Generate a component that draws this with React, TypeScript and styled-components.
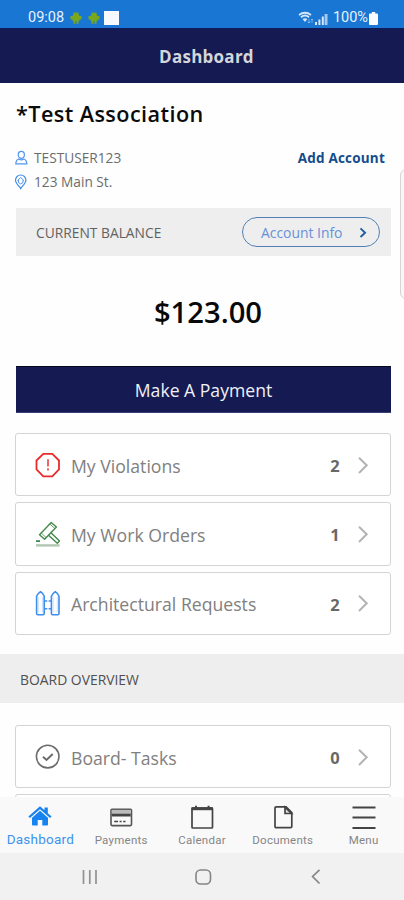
import React from "react";
import styled, { createGlobalStyle } from "styled-components";

const GlobalStyle = createGlobalStyle`
  * { box-sizing: border-box; }
  html, body { margin: 0; padding: 0; background: #fff; }
  body { font-family: "Open Sans", sans-serif; overflow: hidden; }
  svg { display: block; flex: none; }
  button { font-family: inherit; cursor: pointer; }
`;

const Screen = styled.div`
  position: relative;
  width: 404px;
  height: 900px;
  overflow: hidden;
  display: flex;
  flex-direction: column;
  background: #fefefe;
`;

const StatusBar = styled.div`
  height: 28px;
  flex: none;
  padding: 8px 26px 0 28px;
  display: flex;
  align-items: center;
  justify-content: space-between;
  background: #1976d2;
  color: #e8f1fc;
  font-family: Roboto, sans-serif;
  font-size: 14.5px;
  line-height: 20px;
`;

const StatusGroup = styled.div<{ $gap: number }>`
  display: flex;
  align-items: center;
  gap: ${(p) => p.$gap}px;
`;

const Notice = styled.span`
  width: 15px;
  height: 14px;
  margin-left: -2px;
  background: #f6f9ff;
`;

const Header = styled.header`
  height: 55px;
  flex: none;
  display: flex;
  align-items: center;
  justify-content: center;
  padding: 1px 0 0 9px;
  border-top: 1px solid #0f1c5c;
  background: #151a52;
  color: #d3d6db;
  font-size: 17px;
  font-weight: 700;
  letter-spacing: 0.25px;
`;

const Content = styled.main`
  flex: 1;
  min-height: 0;
  overflow: hidden;
  display: flex;
  flex-direction: column;
`;

const Title = styled.h1`
  flex: none;
  margin: 17px 0 0 16px;
  font-size: 21.6px;
  line-height: 28px;
  font-weight: 600;
  letter-spacing: 0.43px;
  color: #0b0b0b;
`;

const AccountRows = styled.section`
  flex: none;
  display: flex;
  justify-content: space-between;
  margin: 18px 19px 0 14px;
`;

const Details = styled.div`
  display: flex;
  flex-direction: column;
`;

const Detail = styled.div`
  height: 24px;
  display: flex;
  align-items: center;
  gap: 6px;
  font-size: 13.7px;
  line-height: 18px;
  color: #6c6c6c;
  white-space: nowrap;
`;

const AddAccount = styled.a`
  font-size: 13.5px;
  line-height: 24px;
  font-weight: 700;
  color: #144c8c;
  white-space: nowrap;
  letter-spacing: 0.2px;
`;

const BalanceBar = styled.section`
  flex: none;
  height: 48px;
  margin: 14px 13px 0 16px;
  padding: 0 11px 0 20px;
  display: flex;
  align-items: center;
  justify-content: space-between;
  background: #eee;
  color: #626262;
  font-size: 13.8px;
`;

const InfoButton = styled.button`
  width: 138px;
  height: 30px;
  padding: 0 11px 0 18px;
  display: flex;
  align-items: center;
  justify-content: space-between;
  border: 1px solid #5380b4;
  border-radius: 15px;
  background: transparent;
  color: #6791d8;
  font-size: 13.9px;
  white-space: nowrap;
`;

const Amount = styled.div`
  flex: none;
  height: 110px;
  padding: 1px 0 0 12px;
  display: flex;
  align-items: center;
  justify-content: center;
  font-size: 29.2px;
  font-weight: 600;
  color: #080808;
`;

const PayButton = styled.button`
  flex: none;
  height: 47px;
  margin: 0 13px 0 16px;
  padding: 0;
  border: 0;
  border-top: 1px solid #05081c;
  border-bottom: 1px solid #3a3f78;
  background: #151a52;
  color: #f0f1f6;
  font-size: 17.6px;
  font-weight: 400;
`;

const CardList = styled.section<{ $top: number }>`
  flex: none;
  margin: ${(p) => p.$top}px 13px 0 15px;
  display: flex;
  flex-direction: column;
  gap: 6px;
`;

const Card = styled.div`
  height: 63.3px;
  padding: 0 21px 0 18px;
  display: flex;
  align-items: center;
  border: 1.5px solid #d4d4d4;
  border-radius: 3px;
  background: #fff;
`;

const CardLabel = styled.span`
  flex: 1;
  margin-left: 9px;
  padding-top: 2px;
  font-size: 17.65px;
  color: #808080;
  white-space: nowrap;
`;

const Count = styled.span`
  width: 12px;
  margin-right: 16px;
  padding-top: 2px;
  text-align: center;
  font-size: 16.5px;
  font-weight: 700;
  color: #686868;
`;

const SectionBar = styled.h2`
  flex: none;
  height: 49px;
  margin: 19px 0 0;
  padding: 2px 0 0 20px;
  display: flex;
  align-items: center;
  background: #eee;
  color: #505050;
  font-size: 13.9px;
  font-weight: 400;
`;

const TabBar = styled.nav`
  flex: none;
  height: 56px;
  display: grid;
  grid-template-columns: repeat(5, 80.8px);
  background: #f9f9f9;
`;

const Tab = styled.div<{ $active?: boolean }>`
  padding-top: 7px;
  display: flex;
  flex-direction: column;
  align-items: center;
  color: ${(p) => (p.$active ? "#1683f0" : "#444")};
`;

const TabLabel = styled.span<{ $active?: boolean }>`
  margin-top: ${(p) => (p.$active ? 1 : 2)}px;
  font-family: Roboto, sans-serif;
  font-size: ${(p) => (p.$active ? 13.5 : 11.5)}px;
  line-height: 16px;
  letter-spacing: 0.25px;
  color: ${(p) => (p.$active ? "#3d94ee" : "#858585")};
  white-space: nowrap;
`;

const SystemBar = styled.footer`
  flex: none;
  height: 47px;
  padding: 0 83px 0 82px;
  display: flex;
  align-items: center;
  justify-content: space-between;
  background: #f1f1f1;
`;

const ScrollHandle = styled.div`
  position: absolute;
  right: -8px;
  top: 169px;
  width: 12px;
  height: 130px;
  border: 1.5px solid #d5d5d5;
  border-radius: 6px;
  background: #f7f7f7;
`;

const Robot = () => (
  <svg width="12" height="14" viewBox="0 0 12 14" fill="#79a81e">
    <path d="M3 4.500a3 3 0 0 1 6 0zM2.600 4.500h6.800V10H2.600zM.5 5h2.500v3.500H.5zM9 5h2.500v3.500H9zM3.500 10h2v2.700h-2zM6.500 10h2v2.700h-2z" />
    <path d="M3.600 1l1 1.700M8.400 1l-1 1.700" stroke="#79a81e" strokeWidth=".7" />
  </svg>
);

const Wifi = () => (
  <svg width="16" height="14" viewBox="0 0 16 14" fill="none" stroke="#d5e6fa">
    <path d="M1 4q6-4.500 12 0M3 6.200q4-3.400 8 0" strokeWidth="1.900" />
    <path d="M4.500 8L7 11l2.400-3Q7 6.500 4.500 8z" fill="#d5e6fa" stroke="none" />
    <path d="M11 8v4m-1.200-1.400L11 12l1.200-1.400M14 12V8m-1 1l1-1 1 1" strokeWidth=".7" opacity=".7" />
  </svg>
);

const Signal = () => (
  <svg width="13" height="13" viewBox="0 0 13 13" fill="#d5e6fa">
    <path d="M0 10h2v3H0zM3.400 7.500h2V13h-2zM6.800 4.500h2V13h-2z" />
    <path d="M9.600 2h2.900v11H9.600z" opacity=".75" />
  </svg>
);

const Battery = () => (
  <svg width="9" height="13" viewBox="0 0 9 13" fill="#f7faff">
    <path d="M2.800 0h3.400v1.600H8q1 0 1 1V12q0 1-1 1H1q-1 0-1-1V2.600q0-1 1-1h1.800z" />
  </svg>
);

const Person = () => (
  <svg width="14" height="16" viewBox="0 0 14 16" fill="none" stroke="#5296f0" strokeWidth="1.200">
    <ellipse cx="7.300" cy="4.800" rx="3.100" ry="3.500" />
    <path d="M4.700 9Q2 9.800 1.800 13.800h11Q12.600 9.800 9.900 9q-2.600 1.600-5.200 0z" />
  </svg>
);

const Pin = () => (
  <svg width="14" height="16" viewBox="0 0 14 16" fill="none" stroke="#438cee" strokeWidth="1.200">
    <path d="M6.700 14.600C5 11.900 1.500 9 1.500 6.200a5.200 5.200 0 0 1 10.400 0c0 2.800-3.500 5.700-5.200 8.400z" />
    <path d="M3.500 6.500l3.200-3 3.200 3M4.500 6v2.500L6.700 10 9 8.500V6" strokeWidth=".9" />
  </svg>
);

const SmallChevron = () => (
  <svg width="9" height="12" viewBox="0 0 9 12" fill="none" stroke="#245f9c" strokeWidth="1.900">
    <path d="M1.500 2.400l4.600 4.300L1.500 11" />
  </svg>
);

const Chevron = () => (
  <svg width="12" height="18" viewBox="0 0 12 18" fill="none" stroke="#b3b3b3" strokeWidth="2">
    <path d="M2 1.700L9.700 9.300 2 17" />
  </svg>
);

const Violation = () => (
  <svg width="28" height="28" viewBox="0 0 28 28" fill="none" stroke="#e92b2b" strokeWidth="1.800">
    <path d="M9.300 2.900h9L25 9.500v9l-6.700 6.800h-9L2.500 18.500v-9z" />
    <path d="M14 8.300v7.200M14 17.300v2.300" strokeWidth="2" stroke="#f06464" />
  </svg>
);

const Gavel = () => (
  <svg width="28" height="28" viewBox="0 0 28 28" fill="none" stroke="#43894a" strokeWidth="1.400" strokeLinejoin="round">
    <path d="M5.500 14.700L17.200 2.500l5.200 4.600L10.600 19.300z" />
    <path d="M7.300 13l4.800 4.600M15.800 4l5 4.500" strokeWidth=".8" />
    <path d="M14.300 15l9 8.200 2.200-2.300-8.800-8.300" />
    <path d="M2 21.100h4" strokeWidth="1.800" />
    <path d="M2 25.400h23.600" stroke="#b0c6b0" strokeWidth="2.400" />
  </svg>
);

const Fence = () => (
  <svg width="28" height="28" viewBox="0 0 28 28" fill="none" stroke="#3f8eed" strokeWidth="1.600" strokeLinejoin="round">
    <path d="M2.600 24.500V7.200q1-2.600 3.900-4.600 2.900 2 3.700 4.600v17.300q0 1.200-1.200 1.200H3.800q-1.200 0-1.200-1.200zM17.400 24.500V7.200q1-2.600 3.900-4.600 2.900 2 3.700 4.600v17.300q0 1.200-1.200 1.200h-5.200q-1.200 0-1.200-1.200z" />
    <path d="M10.500 12h2.800M14.600 12h2.800M10.500 19.800h2.800M14.600 19.800h2.800" />
    <path d="M4.400 8v15.700M8.500 8v15.700M19.200 8v15.700M23.300 8v15.700" stroke="#b9d8fc" strokeWidth=".7" />
  </svg>
);

const TaskCheck = () => (
  <svg width="28" height="28" viewBox="0 0 28 28" fill="none" stroke="#6b6b6b">
    <circle cx="13.700" cy="13.600" r="11.300" strokeWidth="1.600" />
    <path d="M9 13.800l3.500 3.200 6.200-6" strokeWidth="2" />
  </svg>
);

const HomeIcon = () => (
  <svg width="26" height="26" viewBox="0 0 26 26" fill="currentColor">
    <path d="M1.400 12.400L13 2.200l4.500 4V3.500h3.300v5.700l3.800 3.200-1.500 1.700L13 5.200 2.900 14.100z" />
    <path d="M5 13.800l8-7.100 8 7.100V20.500q0 .9-.9.900h-4.800v-5.300h-4.600v5.300H5.900q-.9 0-.9-.9z" />
  </svg>
);

const CreditCard = () => (
  <svg width="26" height="26" viewBox="0 0 26 26" fill="none" stroke="currentColor">
    <rect x="3" y="5.200" width="20.500" height="16.400" rx="1" strokeWidth="1.600" stroke="#555" />
    <path d="M3.800 7.500h18.900" stroke="#bbb" strokeWidth="3.200" />
    <path d="M3.800 11h18.900" strokeWidth="3" />
    <path d="M6.200 17.500h3.800M11.600 17.500h2M15.200 17.500h2.300" strokeWidth="1.700" />
  </svg>
);

const CalendarIcon = () => (
  <svg width="26" height="26" viewBox="0 0 26 26" fill="none" stroke="currentColor">
    <rect x="3" y="4" width="20.500" height="20" rx=".8" strokeWidth="1.700" />
    <path d="M2.500 4.700h21.500" strokeWidth="3" />
    <path d="M7 1.800v3M19.600 1.800v3" strokeWidth="2" />
  </svg>
);

const DocumentIcon = () => (
  <svg width="26" height="26" viewBox="0 0 26 26" fill="none" stroke="currentColor" strokeWidth="1.700">
    <path d="M6.300 2.800h9.800l5.700 5.900v13.700q0 1.300-1.300 1.300H6.300Q5 23.700 5 22.400V4.100q0-1.300 1.300-1.300z" />
    <path d="M15 3.200v6.300h6.500L15 3.200z" fill="#ddd" />
  </svg>
);

const MenuIcon = () => (
  <svg width="26" height="26" viewBox="0 0 26 26" stroke="currentColor" strokeWidth="2.200">
    <path d="M1.500 3.500h23M1.500 13.500h23M1.500 24h23" />
  </svg>
);

const residentItems = [
  { label: "My Violations", count: 2, icon: <Violation /> },
  { label: "My Work Orders", count: 1, icon: <Gavel /> },
  { label: "Architectural Requests", count: 2, icon: <Fence /> },
];

const tabs = [
  { label: "Dashboard", icon: <HomeIcon />, active: true },
  { label: "Payments", icon: <CreditCard /> },
  { label: "Calendar", icon: <CalendarIcon /> },
  { label: "Documents", icon: <DocumentIcon /> },
  { label: "Menu", icon: <MenuIcon /> },
];

export default function App() {
  return (
    <Screen>
      <GlobalStyle />
      <StatusBar>
        <StatusGroup $gap={6}>
          <span>09:08</span>
          <Robot />
          <Robot />
          <Notice />
        </StatusGroup>
        <StatusGroup $gap={1}>
          <Wifi />
          <Signal />
          <span>&nbsp;100%</span>
          <Battery />
        </StatusGroup>
      </StatusBar>
      <Header>Dashboard</Header>
      <Content>
        <Title>*Test Association</Title>
        <AccountRows>
          <Details>
            <Detail><Person />TESTUSER123</Detail>
            <Detail><Pin />123 Main St.</Detail>
          </Details>
          <AddAccount>Add Account</AddAccount>
        </AccountRows>
        <BalanceBar>
          CURRENT BALANCE
          <InfoButton>Account Info<SmallChevron /></InfoButton>
        </BalanceBar>
        <Amount>$123.00</Amount>
        <PayButton>Make A Payment</PayButton>
        <CardList $top={20}>
          {residentItems.map((item) => (
            <Card key={item.label}>
              {item.icon}
              <CardLabel>{item.label}</CardLabel>
              <Count>{item.count}</Count>
              <Chevron />
            </Card>
          ))}
        </CardList>
        <SectionBar>BOARD OVERVIEW</SectionBar>
        <CardList $top={22}>
          <Card>
            <TaskCheck />
            <CardLabel>Board- Tasks</CardLabel>
            <Count>0</Count>
            <Chevron />
          </Card>
          <Card />
        </CardList>
      </Content>
      <TabBar>
        {tabs.map((tab) => (
          <Tab key={tab.label} $active={tab.active}>
            {tab.icon}
            <TabLabel $active={tab.active}>{tab.label}</TabLabel>
          </Tab>
        ))}
      </TabBar>
      <SystemBar>
        <svg width="16" height="16" viewBox="0 0 16 16" stroke="#929292" strokeWidth="1.700">
          <path d="M1.500 1v14M7.800 1v14M14 1v14" />
        </svg>
        <svg width="18" height="18" viewBox="0 0 18 18" fill="none" stroke="#858585" strokeWidth="1.600">
          <rect x="1" y="2" width="14.500" height="14" rx="4.500" />
        </svg>
        <svg width="11" height="17" viewBox="0 0 11 17" fill="none" stroke="#858585" strokeWidth="1.700">
          <path d="M9.500 1.800L2.600 8.500l6.900 7" />
        </svg>
      </SystemBar>
      <ScrollHandle />
    </Screen>
  );
}
